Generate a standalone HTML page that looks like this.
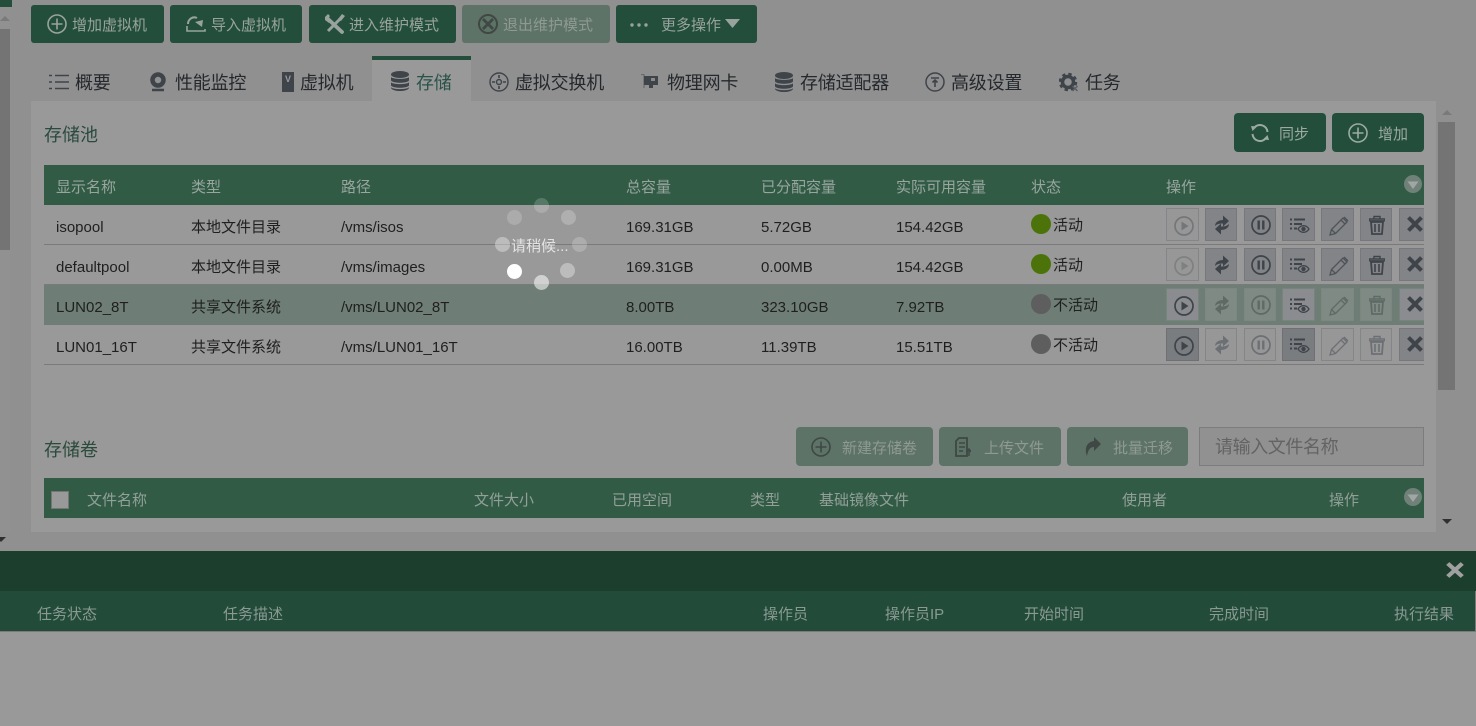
<!DOCTYPE html>
<html><head><meta charset="utf-8"><style>
html,body{margin:0;padding:0;width:1476px;height:726px;overflow:hidden;background:#909090;font-family:"Liberation Sans","Noto Sans CJK SC",sans-serif;font-size:15px;color:#1f1f1f}
.a,.t,.b,.ab,.d,.tab,.dot,svg.i{position:absolute}
.t{white-space:nowrap;line-height:20px;transform:translateY(1px)}
.b{background:#234e3b;border-radius:3px;color:#98a39d;white-space:nowrap;line-height:20px}
.b.off{background:#5e7367;color:#8e9a93}
.h{color:#98a69e}
.h2{color:#92a098}
.tab{top:73px;font-size:18px;line-height:20px;color:#25292d;white-space:nowrap;letter-spacing:-.2px}
.ab{width:31px;height:31px;border:1px solid #76787b;background:#828487}
.ab.off{border-color:#848586;background:#979797}
.ab.s{background:#7a7d80;border-color:#6e7073}
.ab.r{background:#8a8c8f;border-color:#75857c}
.ab.q{background:#7f8a84;border-color:#7b8880}
svg.i{fill:none;stroke:#3e444a;stroke-width:2}
.dot{width:15px;height:15px;border-radius:50%;background:#fff}
.st{width:20px;height:20px;border-radius:50%}
</style></head><body>
<svg width="0" height="0" style="position:absolute"><defs>
<symbol id="plus" viewBox="0 0 20 20"><circle cx="10" cy="10" r="9" fill="none" stroke="currentColor" stroke-width="1.600"/><path d="M10 4.500v11M4.500 10h11" stroke="currentColor" stroke-width="1.600" fill="none"/></symbol>
<symbol id="play" viewBox="0 0 20 20"><circle cx="10" cy="10" r="9" fill="none" stroke="currentColor" stroke-width="1.700"/><path d="M7.500 5.500v9l7-4.500z" fill="currentColor" stroke="none"/></symbol>
<symbol id="sync" viewBox="0 0 20 20"><path d="M3 11C3 7 7 5 11 5V.5l6 5.500-6 5.500V8.500C7 8.500 5 9 3 11zM17 9C17 13 13 15 9 15v4.500L3 14l6-5.500v3c4 0 6-.5 8-2.500z" fill="currentColor" stroke="none"/></symbol>
<symbol id="pause" viewBox="0 0 20 20"><circle cx="10" cy="10" r="9" fill="none" stroke="currentColor" stroke-width="1.700"/><path d="M7.700 5.500v9M12.300 5.500v9" stroke="currentColor" stroke-width="2.400" fill="none"/></symbol>
<symbol id="list" viewBox="0 0 20 16"><path d="M0 1.500h2M4 1.500h11M0 6h2M4 6h8M0 10.500h2M4 10.500h3" stroke="currentColor" stroke-width="2" fill="none"/><path d="M8 11c3-4.500 8-4.500 11 0-3 4.500-8 4.500-11 0z" fill="none" stroke="currentColor" stroke-width="1.300"/><circle cx="13.500" cy="11" r="2.200" fill="currentColor" stroke="none"/></symbol>
<symbol id="pen" viewBox="0 0 20 20"><path d="M1 19l1.500-5.500L14 2l4 4L6.500 17.500zM2.500 13.500l4 4M12 4l4 4" fill="none" stroke="currentColor" stroke-width="1.300"/><path d="M14.500 1.500l1-1 4 4-1 1z" fill="currentColor" stroke="none"/></symbol>
<symbol id="trash" viewBox="0 0 16 20"><path d="M0 4h16v1.800H0zM5 4V1.500h6V4" fill="none" stroke="currentColor" stroke-width="1.400"/><path d="M2 7h12l-1 12H3z" fill="none" stroke="currentColor" stroke-width="1.800"/><path d="M6 9v8M10 9v8" stroke="currentColor" stroke-width="1.600" fill="none"/></symbol>
<symbol id="x" viewBox="0 0 18 18"><path d="M2.500 2.500l13 13M15.500 2.500l-13 13" stroke="currentColor" stroke-width="4" fill="none"/></symbol>
<symbol id="db" viewBox="0 0 18 20"><ellipse cx="9" cy="3.500" rx="9" ry="3.500" fill="currentColor"/><path d="M0 6c2 2.500 16 2.500 18 0v3.500c-2 3-16 3-18 0zM0 11.300c2 2.500 16 2.500 18 0v3.200c-2 3-16 3-18 0zM0 16.300c2 2.500 16 2.500 18 0v.7c-2 4-16 4-18 0z" fill="currentColor"/></symbol>
<symbol id="down" viewBox="0 0 18 18"><circle cx="9" cy="9" r="9" fill="#70817a"/><path d="M3.500 6.500h11L9 14z" fill="#a0a6a3"/></symbol>
</defs></svg>

<!-- left scrollbar -->
<div class="a" style="left:0;top:0;width:12px;height:7px;background:#234e3b"></div>
<div class="a" style="left:0;top:7px;width:10px;height:525px;background:#919191"></div>
<div class="a" style="left:0;top:29px;width:10px;height:221px;background:#747474"></div>
<div class="a" style="left:0;top:16px;border:5px solid transparent;border-top:0;border-bottom:5px solid #7a7a7a;width:0;height:0"></div>

<!-- toolbar -->
<div class="b" style="left:31px;top:5px;width:133px;height:38px"><svg class="a" style="left:16px;top:9px;color:#98a39d" width="20" height="20"><use href="#plus"/></svg><span class="t" style="left:41px;top:10px">增加虚拟机</span></div>
<div class="b" style="left:170px;top:5px;width:132px;height:38px"><svg class="i" style="left:16px;top:10px;stroke:#98a39d" width="20" height="18" viewBox="0 0 20 18"><path d="M2 9C2 4 7 1 11 3" stroke-width="2"/><path d="M17 5l-1 7-7-5z" fill="#98a39d" stroke="none"/><path d="M1 11v5h18v-2" stroke-width="1.600"/></svg><span class="t" style="left:41px;top:10px">导入虚拟机</span></div>
<div class="b" style="left:309px;top:5px;width:147px;height:38px"><svg class="i" style="left:16px;top:9px;stroke:#98a39d" width="20" height="20" viewBox="0 0 20 20"><path d="M3 5l14 13" stroke-width="3.800" stroke-linecap="round"/><path d="M17 3L3 17" stroke-width="3"/><path d="M0 3l3-3 2 2-2 3 3 1-2 3-4-3zM13 5l4-5 3 2-4 5z" fill="#98a39d" stroke="none"/></svg><span class="t" style="left:40px;top:10px">进入维护模式</span></div>
<div class="b off" style="left:462px;top:5px;width:148px;height:38px"><svg class="i" style="left:16px;top:9px;stroke:#3f4844" width="20" height="20" viewBox="0 0 20 20"><circle cx="10" cy="10" r="9"/><path d="M5 5l10 10M15 5L5 15" stroke-width="2.800"/></svg><span class="t" style="left:41px;top:10px">退出维护模式</span></div>
<div class="b" style="left:616px;top:5px;width:141px;height:38px"><svg class="i" style="left:14px;top:18px" width="18" height="4" viewBox="0 0 18 4"><circle cx="2" cy="2" r="1.700" fill="#98a39d" stroke="none"/><circle cx="9" cy="2" r="1.700" fill="#98a39d" stroke="none"/><circle cx="16" cy="2" r="1.700" fill="#98a39d" stroke="none"/></svg><span class="t" style="left:45px;top:10px">更多操作</span><svg class="i" style="left:109px;top:14px" width="16" height="9" viewBox="0 0 16 9"><path d="M0 0h15L7.500 9z" fill="#98a39d" stroke="none"/></svg></div>

<!-- tabs -->
<div class="a" style="left:372px;top:56px;width:99px;height:45px;background:#999;border-top:4px solid #234e3b;box-sizing:border-box"></div>
<svg class="i" style="left:49px;top:74px" width="20" height="16" viewBox="0 0 20 16"><path d="M0 1.500h3M6 1.500h14M0 8h3M6 8h14M0 14.500h3M6 14.500h14" stroke-width="1.600"/></svg>
<div class="tab" style="left:75px">概要</div>
<svg class="i" style="left:149px;top:72px" width="18" height="20" viewBox="0 0 18 20"><circle cx="9" cy="8" r="5.500" stroke-width="4.500"/><path d="M3 18h12" stroke-width="2.500"/></svg>
<div class="tab" style="left:175px">性能监控</div>
<div class="a" style="left:282px;top:72px;width:12px;height:20px;background:#3e444a;color:#999;font-size:9px;line-height:14px;text-align:center;font-weight:bold">V</div>
<div class="tab" style="left:300px">虚拟机</div>
<svg class="a" style="left:391px;top:71px;color:#3e444a" width="18" height="20"><use href="#db"/></svg>
<div class="tab" style="left:416px;color:#2a5249">存储</div>
<svg class="i" style="left:489px;top:72px" width="20" height="20" viewBox="0 0 20 20"><circle cx="10" cy="10" r="9" stroke-width="1.400"/><circle cx="10" cy="10" r="2.500" stroke-width="1.400"/><path d="M10 3v3M10 14v3M3 10h3M14 10h3" stroke-width="1.600"/></svg>
<div class="tab" style="left:515px">虚拟交换机</div>
<svg class="i" style="left:641px;top:74px" width="17" height="15" viewBox="0 0 17 15"><path d="M0 .5h3V14" stroke="#6a6a6a" stroke-width="1.200"/><path d="M3 2h14v9h-5v3H8v-3H3z" fill="#3e444a" stroke="none"/><rect x="10" y="4" width="4" height="3" fill="#8a8a8a" stroke="none"/></svg>
<div class="tab" style="left:667px">物理网卡</div>
<svg class="a" style="left:775px;top:72px;color:#3e444a" width="18" height="20"><use href="#db"/></svg>
<div class="tab" style="left:800px">存储适配器</div>
<svg class="i" style="left:925px;top:72px" width="20" height="20" viewBox="0 0 20 20"><circle cx="10" cy="10" r="9" stroke-width="1.500"/><path d="M6 6h8M10 8.500V15M7.500 10.500L10 8l2.500 2.500" stroke-width="1.600"/></svg>
<div class="tab" style="left:951px">高级设置</div>
<svg class="i" style="left:1059px;top:72px" width="20" height="20" viewBox="0 0 20 20"><circle cx="9" cy="10" r="5.500" stroke-width="3.500"/><circle cx="9" cy="10" r="8" stroke-width="2.500" stroke-dasharray="3.300 3"/><path d="M13.500 14l5 5M18.500 14l-5 5" stroke="#5a5f64" stroke-width="1.500"/></svg>
<div class="tab" style="left:1085px">任务</div>

<!-- panel -->
<div class="a" style="left:31px;top:101px;width:1405px;height:431px;background:#999"></div>
<div class="t" style="left:44px;top:124px;font-size:18px;color:#2a4a3c">存储池</div>
<div class="b" style="left:1234px;top:113px;width:92px;height:39px;color:#9caaa2;border-radius:4px"><svg class="i" style="left:16px;top:10px;stroke:#9caaa2" width="20" height="20" viewBox="0 0 20 20"><path d="M17.500 9A7.500 7.500 0 0 0 4 5M2.500 11A7.500 7.500 0 0 0 16 15" stroke-width="2"/><path d="M1 3l6 .5L2.500 8zM19 17l-6-.5L17.500 12z" fill="#9caaa2" stroke="none"/></svg><span class="t" style="left:45px;top:11px">同步</span></div>
<div class="b" style="left:1332px;top:113px;width:92px;height:39px;color:#9caaa2;border-radius:4px"><svg class="a" style="left:16px;top:10px" width="20" height="20"><use href="#plus"/></svg><span class="t" style="left:46px;top:11px">增加</span></div>

<!-- table head -->
<div class="a" style="left:44px;top:165px;width:1380px;height:40px;background:#315b45"></div>
<div class="t h" style="left:56px;top:177px">显示名称</div>
<div class="t h" style="left:191px;top:177px">类型</div>
<div class="t h" style="left:341px;top:177px">路径</div>
<div class="t h" style="left:626px;top:177px">总容量</div>
<div class="t h" style="left:761px;top:177px">已分配容量</div>
<div class="t h" style="left:896px;top:177px">实际可用容量</div>
<div class="t h" style="left:1031px;top:177px">状态</div>
<div class="t h" style="left:1166px;top:177px">操作</div>
<svg class="a" style="left:1404px;top:175px" width="18" height="18"><use href="#down"/></svg>

<!-- rows -->
<div class="a" style="left:44px;top:205px;width:1380px;height:39px;border-bottom:1px solid #7a7a7a"></div>
<div class="a" style="left:44px;top:245px;width:1380px;height:39px;border-bottom:1px solid #7a7a7a"></div>
<div class="a" style="left:44px;top:285px;width:1380px;height:40px;background:#6e7e76"></div>
<div class="a" style="left:44px;top:325px;width:1380px;height:39px;border-bottom:1px solid #7a7a7a"></div>

<div class="t" style="left:56px;top:217px">isopool</div><div class="t" style="left:191px;top:217px">本地文件目录</div><div class="t" style="left:341px;top:217px">/vms/isos</div><div class="t" style="left:626px;top:217px">169.31GB</div><div class="t" style="left:761px;top:217px">5.72GB</div><div class="t" style="left:896px;top:217px">154.42GB</div>
<div class="a st" style="left:1031px;top:214px;background:#4c7309"></div><div class="t" style="left:1053px;top:215px">活动</div>

<div class="t" style="left:56px;top:257px">defaultpool</div><div class="t" style="left:191px;top:257px">本地文件目录</div><div class="t" style="left:341px;top:257px">/vms/images</div><div class="t" style="left:626px;top:257px">169.31GB</div><div class="t" style="left:761px;top:257px">0.00MB</div><div class="t" style="left:896px;top:257px">154.42GB</div>
<div class="a st" style="left:1031px;top:254px;background:#4c7309"></div><div class="t" style="left:1053px;top:255px">活动</div>

<div class="t" style="left:56px;top:297px">LUN02_8T</div><div class="t" style="left:191px;top:297px">共享文件系统</div><div class="t" style="left:341px;top:297px">/vms/LUN02_8T</div><div class="t" style="left:626px;top:297px">8.00TB</div><div class="t" style="left:761px;top:297px">323.10GB</div><div class="t" style="left:896px;top:297px">7.92TB</div>
<div class="a st" style="left:1031px;top:294px;background:#5e5e5e"></div><div class="t" style="left:1053px;top:295px">不活动</div>

<div class="t" style="left:56px;top:337px">LUN01_16T</div><div class="t" style="left:191px;top:337px">共享文件系统</div><div class="t" style="left:341px;top:337px">/vms/LUN01_16T</div><div class="t" style="left:626px;top:337px">16.00TB</div><div class="t" style="left:761px;top:337px">11.39TB</div><div class="t" style="left:896px;top:337px">15.51TB</div>
<div class="a st" style="left:1031px;top:334px;background:#5e5e5e"></div><div class="t" style="left:1053px;top:335px">不活动</div>

<!-- actions row 1 -->
<div class="ab off" style="left:1166px;top:208px;color:#74777a"><svg class="a" style="left:7px;top:7px" width="20" height="20"><use href="#play"/></svg></div>
<div class="ab" style="left:1205px;top:208px;width:30px;color:#3e444a"><svg class="a" style="left:6px;top:6px" width="20" height="20"><use href="#sync"/></svg></div>
<div class="ab" style="left:1244px;top:208px;width:30px;color:#3e444a"><svg class="a" style="left:6px;top:6px" width="20" height="20"><use href="#pause"/></svg></div>
<div class="ab" style="left:1282px;top:208px;color:#3e444a"><svg class="a" style="left:7px;top:9px" width="20" height="16"><use href="#list"/></svg></div>
<div class="ab" style="left:1321px;top:208px;color:#4e5359"><svg class="a" style="left:7px;top:7px" width="20" height="20"><use href="#pen"/></svg></div>
<div class="ab" style="left:1360px;top:208px;width:30px;color:#3e444a"><svg class="a" style="left:8px;top:6px" width="16" height="20"><use href="#trash"/></svg></div>
<div class="ab" style="left:1399px;top:208px;width:24px;border-right:0;overflow:hidden;color:#3e444a"><svg class="a" style="left:5px;top:6px" width="20" height="18"><use href="#x"/></svg></div>
<!-- actions row 2 -->
<div class="ab off" style="left:1166px;top:248px;color:#7e8082"><svg class="a" style="left:7px;top:7px" width="20" height="20"><use href="#play"/></svg></div>
<div class="ab" style="left:1205px;top:248px;width:30px;color:#3e444a"><svg class="a" style="left:6px;top:6px" width="20" height="20"><use href="#sync"/></svg></div>
<div class="ab" style="left:1244px;top:248px;width:30px;color:#3e444a"><svg class="a" style="left:6px;top:6px" width="20" height="20"><use href="#pause"/></svg></div>
<div class="ab" style="left:1282px;top:248px;color:#3e444a"><svg class="a" style="left:7px;top:9px" width="20" height="16"><use href="#list"/></svg></div>
<div class="ab" style="left:1321px;top:248px;color:#4e5359"><svg class="a" style="left:7px;top:7px" width="20" height="20"><use href="#pen"/></svg></div>
<div class="ab" style="left:1360px;top:248px;width:30px;color:#3e444a"><svg class="a" style="left:8px;top:6px" width="16" height="20"><use href="#trash"/></svg></div>
<div class="ab" style="left:1399px;top:248px;width:24px;border-right:0;overflow:hidden;color:#3e444a"><svg class="a" style="left:5px;top:6px" width="20" height="18"><use href="#x"/></svg></div>
<!-- actions row 3 -->
<div class="ab r" style="left:1166px;top:288px;color:#3e444a"><svg class="a" style="left:7px;top:7px" width="20" height="20"><use href="#play"/></svg></div>
<div class="ab q" style="left:1205px;top:288px;width:30px;color:#5f6a65"><svg class="a" style="left:6px;top:6px" width="20" height="20"><use href="#sync"/></svg></div>
<div class="ab q" style="left:1244px;top:288px;width:30px;color:#5f6a65"><svg class="a" style="left:6px;top:6px" width="20" height="20"><use href="#pause"/></svg></div>
<div class="ab r" style="left:1282px;top:288px;color:#3e444a"><svg class="a" style="left:7px;top:9px" width="20" height="16"><use href="#list"/></svg></div>
<div class="ab q" style="left:1321px;top:288px;color:#5f6a65"><svg class="a" style="left:7px;top:7px" width="20" height="20"><use href="#pen"/></svg></div>
<div class="ab q" style="left:1360px;top:288px;width:30px;color:#5f6a65"><svg class="a" style="left:8px;top:6px" width="16" height="20"><use href="#trash"/></svg></div>
<div class="ab r" style="left:1399px;top:288px;width:24px;border-right:0;overflow:hidden;color:#3e444a"><svg class="a" style="left:5px;top:6px" width="20" height="18"><use href="#x"/></svg></div>
<!-- actions row 4 -->
<div class="ab s" style="left:1166px;top:328px;color:#3e444a"><svg class="a" style="left:7px;top:7px" width="20" height="20"><use href="#play"/></svg></div>
<div class="ab off" style="left:1205px;top:328px;width:30px;color:#6c7074"><svg class="a" style="left:6px;top:6px" width="20" height="20"><use href="#sync"/></svg></div>
<div class="ab off" style="left:1244px;top:328px;width:30px;color:#6c7074"><svg class="a" style="left:6px;top:6px" width="20" height="20"><use href="#pause"/></svg></div>
<div class="ab s" style="left:1282px;top:328px;color:#3e444a"><svg class="a" style="left:7px;top:9px" width="20" height="16"><use href="#list"/></svg></div>
<div class="ab off" style="left:1321px;top:328px;color:#6c7074"><svg class="a" style="left:7px;top:7px" width="20" height="20"><use href="#pen"/></svg></div>
<div class="ab off" style="left:1360px;top:328px;width:30px;color:#6c7074"><svg class="a" style="left:8px;top:6px" width="16" height="20"><use href="#trash"/></svg></div>
<div class="ab" style="left:1399px;top:328px;width:24px;border-right:0;overflow:hidden;color:#3e444a"><svg class="a" style="left:5px;top:6px" width="20" height="18"><use href="#x"/></svg></div>

<!-- spinner -->
<div class="dot" style="left:534px;top:198px;opacity:.18"></div>
<div class="dot" style="left:561px;top:210px;opacity:.22"></div>
<div class="dot" style="left:572px;top:237px;opacity:.2"></div>
<div class="dot" style="left:560px;top:263px;opacity:.35"></div>
<div class="dot" style="left:534px;top:275px;opacity:.55"></div>
<div class="dot" style="left:507px;top:264px;opacity:1"></div>
<div class="dot" style="left:495px;top:237px;opacity:.35"></div>
<div class="dot" style="left:507px;top:210px;opacity:.18"></div>
<div class="t" style="left:511px;top:236px;color:#e4e4e4">请稍候...</div>

<!-- volumes -->
<div class="t" style="left:44px;top:439px;font-size:18px;color:#2a4a3c">存储卷</div>
<div class="b off" style="left:796px;top:427px;width:137px;height:39px;border-radius:4px"><svg class="a" style="left:15px;top:10px;color:#3f4844" width="20" height="20"><use href="#plus"/></svg><span class="t" style="left:46px;top:11px">新建存储卷</span></div>
<div class="b off" style="left:939px;top:427px;width:122px;height:39px;border-radius:4px"><svg class="i" style="left:16px;top:10px;stroke:#3f4844" width="16" height="20" viewBox="0 0 16 20"><path d="M4 1h8v18H1V4z" stroke-width="1.800"/><path d="M4 6h6M4 10h6M4 14h4" stroke-width="1.500"/><path d="M14 19v-6M11.500 15l2.500-3 2 3" stroke-width="1.500"/></svg><span class="t" style="left:45px;top:11px">上传文件</span></div>
<div class="b off" style="left:1067px;top:427px;width:121px;height:39px;border-radius:4px"><svg class="i" style="left:18px;top:10px" width="16" height="20" viewBox="0 0 16 20"><path d="M9 0l7 7-7 7v-4C5 10 3 13 2 19-1 11 2 5 9 4z" fill="#3f4844" stroke="none"/></svg><span class="t" style="left:46px;top:11px">批量迁移</span></div>
<div class="a" style="left:1199px;top:427px;width:225px;height:39px;box-sizing:border-box;border:1px solid #7c7c7c;background:#919191;color:#636363;font-size:18px;letter-spacing:-.4px;line-height:39px;padding-left:15px">请输入文件名称</div>

<div class="a" style="left:44px;top:478px;width:1380px;height:40px;background:#315b45"></div>
<div class="a" style="left:51px;top:491px;width:16px;height:16px;border:1px solid #757575;background:#999"></div>
<div class="t h2" style="left:87px;top:490px">文件名称</div>
<div class="t h2" style="left:474px;top:490px">文件大小</div>
<div class="t h2" style="left:612px;top:490px">已用空间</div>
<div class="t h2" style="left:750px;top:490px">类型</div>
<div class="t h2" style="left:819px;top:490px">基础镜像文件</div>
<div class="t h2" style="left:1122px;top:490px">使用者</div>
<div class="t h2" style="left:1329px;top:490px">操作</div>
<svg class="a" style="left:1404px;top:488px" width="18" height="18"><use href="#down"/></svg>

<!-- right scrollbar -->
<div class="a" style="left:1438px;top:122px;width:17px;height:268px;background:#747474"></div>
<div class="a" style="left:1442px;top:110px;width:0;height:0;border:5px solid transparent;border-top:0;border-bottom:5px solid #7a7a7a"></div>
<div class="a" style="left:1442px;top:519px;width:0;height:0;border:5px solid transparent;border-bottom:0;border-top:5px solid #303030"></div>
<div class="a" style="left:0;top:537px;width:0;height:0;border:5px solid transparent;border-bottom:0;border-top:5px solid #303030;margin-left:-4px"></div>

<!-- bottom panel -->
<div class="a" style="left:0;top:551px;width:1476px;height:40px;background:#1c3f2d"></div>
<div class="a" style="left:0;top:591px;width:1476px;height:40px;background:#224b3a"></div>
<div class="a" style="left:0;top:631px;width:1476px;height:95px;background:#999;border-top:1px solid #7a7a7a;box-sizing:border-box"></div>
<div class="a" style="left:1475px;top:591px;width:1px;height:40px;background:#7a7a7a"></div>
<svg class="a" style="left:1445px;top:561px;color:#a0a0a0" width="20" height="18" viewBox="0 0 18 18" preserveAspectRatio="none"><use href="#x"/></svg>
<div class="t" style="left:37px;top:604px;color:#8a9a92">任务状态</div>
<div class="t" style="left:223px;top:604px;color:#8a9a92">任务描述</div>
<div class="t" style="left:763px;top:604px;color:#8a9a92">操作员</div>
<div class="t" style="left:885px;top:604px;color:#8a9a92">操作员IP</div>
<div class="t" style="left:1024px;top:604px;color:#8a9a92">开始时间</div>
<div class="t" style="left:1209px;top:604px;color:#8a9a92">完成时间</div>
<div class="t" style="left:1394px;top:604px;color:#8a9a92">执行结果</div>
</body></html>
